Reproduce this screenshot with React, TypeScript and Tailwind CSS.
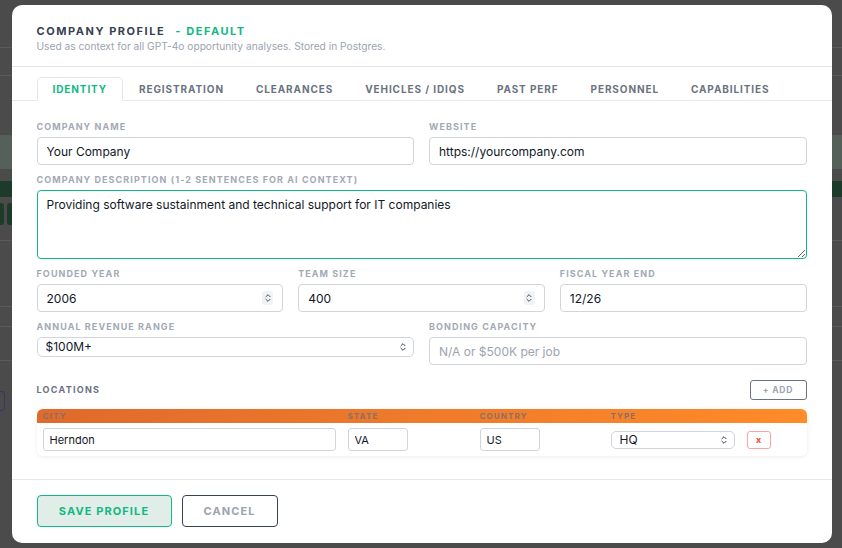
import { ChevronsUpDown } from "lucide-react";

const font = { fontFamily: "Inter, 'Noto Sans', sans-serif" };

const tabs = ["Identity", "Registration", "Clearances", "Vehicles / IDIQs", "Past Perf", "Personnel", "Capabilities"];

function Label({ children }: { children: React.ReactNode }) {
  return (
    <div className="h-[12px] mb-[4px] text-[9px] leading-[12px] font-bold tracking-[0.12em] uppercase text-[#a3a9b4] whitespace-nowrap">
      {children}
    </div>
  );
}

function TextInput({ value, placeholder }: { value?: string; placeholder?: string }) {
  return (
    <input
      defaultValue={value}
      placeholder={placeholder}
      className="block w-full h-[28px] px-[9px] text-[12px] text-[#111827] placeholder:text-[#9ca3af] border border-[#d1d5db] rounded-[4px] outline-none bg-white"
    />
  );
}

// number field with the mac-style stepper glyph
function NumberInput({ value }: { value: string }) {
  return (
    <div className="relative">
      <TextInput value={value} />
      <div className="absolute right-[10px] top-[7px] w-[11px] h-[14px] rounded-[3px] bg-[#f1f2f4] flex items-center justify-center text-[#374151]">
        <ChevronsUpDown size={10} strokeWidth={2.2} />
      </div>
    </div>
  );
}

function Select({ value, className }: { value: string; className: string }) {
  return (
    <div className={`relative ${className}`}>
      <select
        defaultValue={value}
        className="block appearance-none w-full h-full pl-[8px] py-0 text-[12px] leading-none text-[#111827] border border-[#d1d5db] rounded-[5px] bg-white outline-none"
      >
        <option>{value}</option>
      </select>
      <ChevronsUpDown size={10} strokeWidth={2.4} className="absolute right-[6px] top-1/2 -translate-y-1/2 text-[#374151] pointer-events-none" />
    </div>
  );
}

function BackgroundPage() {
  return (
    <div className="flex flex-col h-full">
      <div className="h-[48px] border-b border-[#5a5a5a]" />
      <div className="h-[28px] border-b border-[#5a5a5a]" />
      <div className="h-[60px] border-b border-[#5a5a5a]" />
      <div className="h-[33px] bg-[#55605a]" />
      <div className="h-[12px]" />
      <div className="flex justify-between">
        <div className="h-[16px] w-[12px] bg-[#1d3b2b]" />
        <div className="h-[16px] w-[12px] bg-[#1d3b2b]" />
      </div>
      <div className="h-[6px]" />
      <div className="flex gap-[3px]">
        <div className="h-[22px] w-[4px] bg-[#1d3b2b] rounded-r-[3px]" />
        <div className="h-[22px] w-[5px] bg-[#1d3b2b] rounded-l-[3px]" />
      </div>
      <div className="h-[16px] border-b border-[#5a5a5a]" />
      <div className="h-[66px] border-b border-[#5a5a5a]" />
      <div className="h-[20px] border-b border-[#5a5a5a]" />
      <div className="h-[34px] border-b border-[#5a5a5a]" />
      <div className="h-[30px]" />
      <div className="h-[20px] w-[5px] border border-[#3b3566] rounded-r-[4px] border-l-0" />
    </div>
  );
}

export default function App() {
  return (
    <div className="relative w-[842px] h-[548px] overflow-hidden bg-[#4b4b4b]" style={font}>
      <BackgroundPage />
      <div className="absolute inset-0 flex items-center justify-center">
        <div className="w-[820px] h-[538px] ml-px bg-white rounded-[10px] flex flex-col">
          {/* header */}
          <div className="px-[25px] pt-[19px] pb-[14px] border-b border-[#e5e7eb]">
            <div className="text-[11px] leading-[14px] font-bold tracking-[0.14em] text-[#374151] whitespace-nowrap">
              COMPANY PROFILE <span className="text-[#10b981] ml-[6px]">- DEFAULT</span>
            </div>
            <div className="mt-[2px] text-[10.2px] leading-[12px] text-[#9ca3af]">
              Used as context for all GPT-4o opportunity analyses. Stored in Postgres.
            </div>
          </div>

          {/* tabs */}
          <div className="px-[25px] pt-[10px] border-b border-[#e5e7eb] flex">
            {tabs.map((t, i) => (
              <div
                key={t}
                className={`h-[24px] -mb-px px-[15px] flex items-center whitespace-nowrap text-[10px] font-bold tracking-[0.09em] uppercase border ${
                  i === 0
                    ? "text-[#10b981] bg-white border-b-white border-[#e5e7eb] rounded-t-[5px]"
                    : "text-[#6b7280] border-transparent"
                }`}
              >
                {t}
              </div>
            ))}
          </div>

          {/* body */}
          <div className="flex-1 px-[25px] pt-[20px] flex flex-col gap-[9px]">
            <div className="grid grid-cols-2 gap-[15px]">
              <div>
                <Label>Company Name</Label>
                <TextInput value="Your Company" />
              </div>
              <div>
                <Label>Website</Label>
                <TextInput value="https://yourcompany.com" />
              </div>
            </div>

            <div>
              <Label>Company Description (1-2 sentences for AI context)</Label>
              <textarea
                defaultValue="Providing software sustainment and technical support for IT companies"
                className="block w-full h-[69px] px-[9px] py-[6px] text-[12px] leading-[16px] text-[#111827] border border-[#10b981] rounded-[4px] outline-none"
              />
            </div>

            <div className="grid grid-cols-3 gap-[15px]">
              <div>
                <Label>Founded Year</Label>
                <NumberInput value="2006" />
              </div>
              <div>
                <Label>Team Size</Label>
                <NumberInput value="400" />
              </div>
              <div>
                <Label>Fiscal Year End</Label>
                <TextInput value="12/26" />
              </div>
            </div>

            <div className="grid grid-cols-2 gap-[15px] items-start">
              <div>
                <Label>Annual Revenue Range</Label>
                <Select value="$100M+" className="h-[20px]" />
              </div>
              <div>
                <Label>Bonding Capacity</Label>
                <TextInput placeholder="N/A or $500K per job" />
              </div>
            </div>

            {/* locations */}
            <div className="mt-[6px] flex items-center justify-between h-[20px]">
              <div className="text-[9px] font-bold tracking-[0.14em] text-[#6b7280]">LOCATIONS</div>
              <button className="w-[57px] h-[20px] border border-[#6b7280] rounded-[3px] text-[8.5px] font-bold tracking-[0.1em] text-[#9ca3af]">
                + ADD
              </button>
            </div>

            <div className="rounded-[6px] overflow-hidden shadow-[0_1px_4px_rgba(0,0,0,0.08)]">
              <div className="h-[14px] grid grid-cols-[305px_132px_131px_136px_1fr] items-center bg-gradient-to-r from-[#de6a2c] to-[#ff8b29] text-[8px] font-bold tracking-[0.14em] text-[#8a6f69]">
                <div className="px-[6px]">CITY</div>
                <div className="px-[6px]">STATE</div>
                <div className="px-[6px]">COUNTRY</div>
                <div className="px-[6px]">TYPE</div>
                <div />
              </div>
              <div className="h-[33px] grid grid-cols-[305px_132px_131px_136px_1fr] items-center bg-white">
                <div className="px-[6px]">
                  <input defaultValue="Herndon" className="block w-full h-[23px] px-[6px] text-[11px] text-[#111827] border border-[#d1d5db] rounded-[3px] outline-none" />
                </div>
                <div className="px-[6px]">
                  <input defaultValue="VA" className="block w-[60px] h-[23px] px-[6px] text-[11px] text-[#111827] border border-[#d1d5db] rounded-[3px] outline-none" />
                </div>
                <div className="px-[6px]">
                  <input defaultValue="US" className="block w-[60px] h-[23px] px-[6px] text-[11px] text-[#111827] border border-[#d1d5db] rounded-[3px] outline-none" />
                </div>
                <div className="px-[6px]">
                  <Select value="HQ" className="w-[124px] h-[18px]" />
                </div>
                <div className="px-[6px]">
                  <button className="block w-[24px] h-[18px] border border-[#fca5a5] rounded-[3px] text-[9px] font-bold leading-none text-[#ef4444]">
                    x
                  </button>
                </div>
              </div>
            </div>
          </div>

          {/* footer */}
          <div className="px-[25px] pt-[15px] pb-[16px] border-t border-[#e5e7eb] flex gap-[10px]">
            <button className="w-[135px] h-[32px] rounded-[4px] bg-[#e0ede9] border border-[#10b981] text-[11px] font-bold tracking-[0.1em] text-[#10b981]">
              SAVE PROFILE
            </button>
            <button className="w-[96px] h-[32px] rounded-[4px] border border-[#374151] text-[11px] font-bold tracking-[0.1em] text-[#9ca3af]">
              CANCEL
            </button>
          </div>
        </div>
      </div>
    </div>
  );
}
